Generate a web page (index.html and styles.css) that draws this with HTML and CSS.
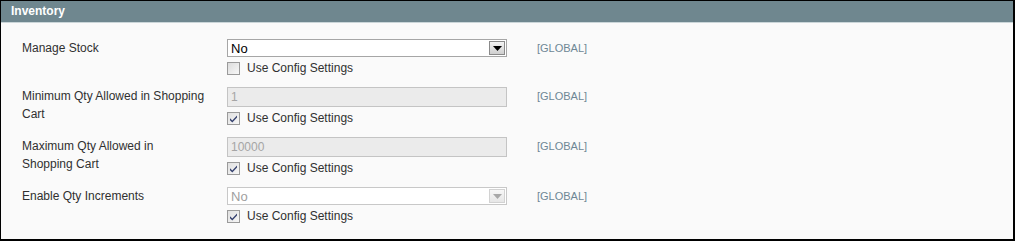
FILE: index.html
```html
<!DOCTYPE html>
<html lang="en">
<head>
  <meta charset="UTF-8" />
  <title>Inventory</title>
  <link rel="stylesheet" href="styles.css">
</head>
<body>

  <div class="fieldset">
    <div class="legend">Inventory</div>

    <div class="rows">
      <div class="row">
        <div class="label">Manage Stock</div>
        <div class="value">
          <div class="select">
            <span class="select-text">No</span>
            <span class="select-btn">
              <svg width="9" height="5" viewBox="0 0 9 5"><path d="M0 0H9L4.5 5Z" fill="#000"/></svg>
            </span>
          </div>
          <div class="use-default">
            <span class="check"></span>
            <span>Use Config Settings</span>
          </div>
        </div>
        <div class="scope">[GLOBAL]</div>
      </div>

      <div class="row">
        <div class="label">Minimum Qty Allowed in Shopping Cart</div>
        <div class="value">
          <div class="input disabled">1</div>
          <div class="use-default">
            <span class="check checked">
              <svg width="9" height="9" viewBox="0 0 9 9"><path d="M1 4.2L3.3 6.6L8 1.6V3.6L3.3 8.6L1 6.2Z" fill="#34406e"/></svg>
            </span>
            <span>Use Config Settings</span>
          </div>
        </div>
        <div class="scope">[GLOBAL]</div>
      </div>

      <div class="row">
        <div class="label">Maximum Qty Allowed in Shopping Cart</div>
        <div class="value">
          <div class="input disabled">10000</div>
          <div class="use-default">
            <span class="check checked">
              <svg width="9" height="9" viewBox="0 0 9 9"><path d="M1 4.2L3.3 6.6L8 1.6V3.6L3.3 8.6L1 6.2Z" fill="#34406e"/></svg>
            </span>
            <span>Use Config Settings</span>
          </div>
        </div>
        <div class="scope">[GLOBAL]</div>
      </div>

      <div class="row">
        <div class="label">Enable Qty Increments</div>
        <div class="value">
          <div class="select disabled">
            <span class="select-text">No</span>
            <span class="select-btn">
              <svg width="9" height="5" viewBox="0 0 9 5"><path d="M0 0H9L4.5 5Z" fill="#a8a8a8"/></svg>
            </span>
          </div>
          <div class="use-default">
            <span class="check checked">
              <svg width="9" height="9" viewBox="0 0 9 9"><path d="M1 4.2L3.3 6.6L8 1.6V3.6L3.3 8.6L1 6.2Z" fill="#34406e"/></svg>
            </span>
            <span>Use Config Settings</span>
          </div>
        </div>
        <div class="scope">[GLOBAL]</div>
      </div>
    </div>
  </div>

</body>
</html>
```

FILE: styles.css
```css
body {
  margin: 0;
  font-family: "Liberation Sans", Arial, sans-serif;
  font-size: 12px;
  color: #303030;
  background: #fff;
}

.fieldset {
  box-sizing: border-box;
  width: 1015px;
  height: 241px;
  border-style: solid;
  border-color: #000;
  border-width: 1px 2px 2px 1px;
  background: #fafafa;
}

.legend {
  height: 21px;
  line-height: 21px;
  padding-left: 10px;
  background: #6f878f;
  border-bottom: 1px solid #cbd6d9;
  color: #fff;
  font-weight: bold;
}

.rows {
  padding: 16px 0 0 21px;
}

.row {
  display: grid;
  grid-template-columns: 205px 280px auto;
  padding-bottom: 12px;
}

.label {
  line-height: 18px;
  padding-right: 20px;
}

.scope {
  margin-left: 30px;
  font-size: 11px;
  line-height: 18px;
  color: #6e8795;
}

.select {
  box-sizing: border-box;
  height: 18px;
  display: flex;
  align-items: center;
  border: 1px solid #a6a6a6;
  background: #fff;
  color: #000;
}

.select-text {
  flex: 1;
  padding-left: 3px;
  font-size: 13px;
}

.select-btn {
  box-sizing: border-box;
  width: 16px;
  height: 14px;
  margin-right: 1px;
  display: flex;
  align-items: center;
  justify-content: center;
  border: 1px solid #8a8a8a;
  background: linear-gradient(#f4f4f4, #cfcfcf);
}

.select.disabled {
  border-color: #c8c8c8;
  color: #a0a0a0;
}

.select.disabled .select-btn {
  border-color: #d2d2d2;
  background: linear-gradient(#f7f7f7, #e6e6e6);
}

.input {
  box-sizing: border-box;
  height: 20px;
  line-height: 18px;
  padding-left: 3px;
  border: 1px solid #c4c4c4;
  background: #fff;
}

.input.disabled {
  background: #ebebeb;
  color: #a5a5a5;
}

.use-default {
  display: flex;
  align-items: center;
  gap: 7px;
  height: 14px;
  margin-top: 4px;
}

.check {
  box-sizing: border-box;
  width: 13px;
  height: 13px;
  display: flex;
  align-items: center;
  justify-content: center;
  border: 1px solid #9a9a9a;
  background: linear-gradient(135deg, #dcdcdc, #f8f8f8);
}

.check.checked {
  background: linear-gradient(135deg, #e0e0e0, #f6f6f6);
}
```
